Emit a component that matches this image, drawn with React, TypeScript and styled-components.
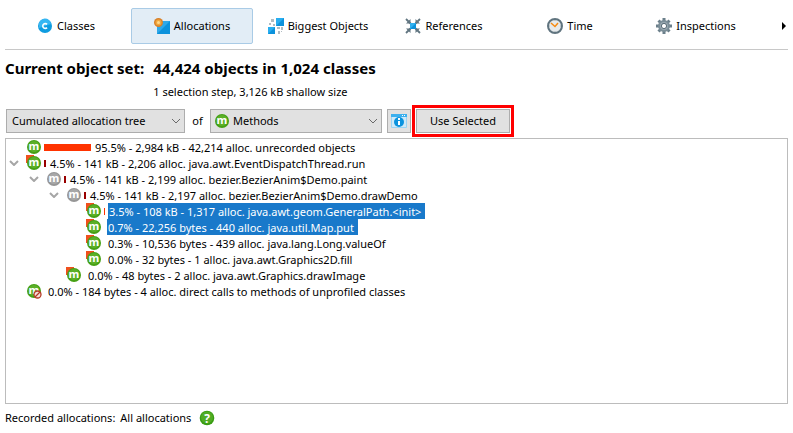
import React from "react";
import styled, { createGlobalStyle } from "styled-components";

const GlobalStyle = createGlobalStyle`
  * { box-sizing: border-box; }
  body {
    margin: 0;
    background: #fff;
    color: #000;
    font: 11px/16px "Noto Sans", "Open Sans", sans-serif;
  }
  button, select { font: inherit; color: inherit; }
`;

const Page = styled.main`
  display: flex;
  flex-direction: column;
  min-height: 100vh;
  padding: 8px 5px 7px;
`;

const Toolbar = styled.nav`
  display: flex;
  align-items: center;
  gap: 4px;
  padding-bottom: 5px;
  border-bottom: 1px solid #c8c8c8;
`;

const Tab = styled.button<{ $active?: boolean }>`
  display: flex;
  flex: 1 1 0;
  align-items: center;
  justify-content: center;
  gap: 4px;
  height: 36px;
  padding: 0;
  white-space: nowrap;
  border: 1px solid ${(p) => (p.$active ? "#a9cbe6" : "transparent")};
  border-radius: 2px;
  background: ${(p) => (p.$active ? "#e2edf6" : "transparent")};
`;

const MoreButton = styled.button`
  display: flex;
  align-items: center;
  justify-content: flex-end;
  width: 27px;
  height: 36px;
  padding: 0 2px 0 0;
  border: 0;
  background: transparent;
`;

const Summary = styled.header`
  display: grid;
  grid-template-columns: auto 1fr;
  column-gap: 9px;
  padding-top: 8px;
`;

const Title = styled.h1`
  margin: 0;
  font-size: 15px;
  line-height: 20px;
  font-weight: 700;
`;

const Detail = styled.p`
  grid-column: 2;
  margin: 0;
  padding-top: 6px;
`;

const Controls = styled.div`
  display: flex;
  align-items: center;
  height: 32px;
  margin-top: 5px;
  padding-left: 1px;
`;

const SelectBox = styled.label<{ $width: number }>`
  position: relative;
  display: block;
  width: ${(p) => p.$width}px;
`;

const Select = styled.select<{ $icon?: boolean }>`
  display: block;
  appearance: none;
  width: 100%;
  height: 24px;
  padding: 0 20px 0 ${(p) => (p.$icon ? 22 : 5)}px;
  border: 1px solid #adadad;
  border-radius: 0;
  background: #e1e1e1;
`;

const SelectMark = styled.span<{ $side: "left" | "right" }>`
  position: absolute;
  top: 0;
  bottom: 0;
  ${(p) => p.$side}: 4px;
  display: flex;
  align-items: center;
  pointer-events: none;
`;

const Joiner = styled.span`
  width: 25px;
  text-align: center;
`;

const PushButton = styled.button<{ $width: number }>`
  display: flex;
  align-items: center;
  justify-content: center;
  width: ${(p) => p.$width}px;
  height: 24px;
  padding: 0;
  white-space: nowrap;
  border: 1px solid #adadad;
  background: #e1e1e1;
`;

const InfoSlot = styled.div`
  margin: 0 1px 0 5px;
`;

const Highlight = styled.div`
  padding: 1px;
  border: 3px solid #f00;
`;

const Tree = styled.ul`
  flex: 1;
  margin: 1px 0 0;
  padding: 0;
  list-style: none;
  border: 1px solid #bcbcbc;
`;

const Row = styled.li<{ $level: number }>`
  display: flex;
  align-items: center;
  height: 16px;
  padding-left: ${(p) => 2 + p.$level * 20}px;
  white-space: nowrap;
`;

const Toggle = styled.button`
  display: flex;
  align-items: center;
  width: 18px;
  height: 16px;
  padding: 0 0 0 1px;
  border: 0;
  background: transparent;
`;

const ToggleSpace = styled.span`
  width: 18px;
`;

const Bar = styled.span<{ $color: string; $size: number }>`
  width: ${(p) => p.$size}px;
  height: 7px;
  margin-left: 2px;
  background: ${(p) => p.$color};
`;

const RowLabel = styled.span<{ $selected?: boolean }>`
  height: 16px;
  margin-left: 3px;
  padding: 1px 4px 0 1px;
  line-height: 15px;
  color: ${(p) => (p.$selected ? "#fff" : "#000")};
  background: ${(p) => (p.$selected ? "#1979ca" : "transparent")};
`;

const Footer = styled.footer`
  display: flex;
  align-items: center;
  gap: 5px;
  height: 16px;
  margin-top: 6px;
`;

const HelpButton = styled.button`
  display: flex;
  margin-left: 3px;
  padding: 0;
  border: 0;
  background: transparent;
`;

const Glyph = styled.text`
  font-family: "Open Sans", sans-serif;
  font-weight: 700;
  fill: #fff;
  text-anchor: middle;
`;

const ClassIcon = () => (
  <svg width="16" height="16" viewBox="0 0 16 16" aria-hidden="true">
    <circle cx="8" cy="8" r="7" fill="#0f9ce0" />
    <path d="M2 7a6 6 0 0 1 12-1L2 10z" fill="#35b6f2" />
    <path d="M10 6.4A2.4 2.4 0 1 0 10 9.6" fill="none" stroke="#fff" strokeWidth="1.6" />
  </svg>
);

const AllocationIcon = () => (
  <svg width="16" height="16" viewBox="0 0 16 16" aria-hidden="true">
    <path d="M3 3h13v13H3z" fill="#0c92dc" />
    <path d="M3 3h13L3 16z" fill="#2fa8e8" />
    <circle cx="4.5" cy="4.5" r="4.5" fill="#d9822b" />
    <circle cx="4.5" cy="4.5" r="3" fill="#f2a73c" />
    <circle cx="4.5" cy="4.5" r="1.5" fill="#ffd98a" />
  </svg>
);

const BiggestIcon = () => (
  <svg width="16" height="16" viewBox="0 0 16 16" aria-hidden="true">
    <path d="M8 0h8v8H8zM0 9h7v7H0z" fill="#0c92dc" />
    <path d="M8 0h8L8 8zM0 9h7l-7 7z" fill="#28aef0" />
    <path d="M3 1h3v3H3zM1 5h2v2H1zM5 6h2v2H5zM9 9h3v2H9zM13 9h2v3h-2zM10 13h2v3h-2zM13 13h1v1h-1z" fill="#b1bcc2" />
  </svg>
);

const ReferencesIcon = () => (
  <svg width="16" height="16" viewBox="0 0 16 16" aria-hidden="true">
    <path d="M1 1l5 5M15 1l-5 5M1 15l5-5M15 15l-5-5" stroke="#617580" strokeWidth="1.8" />
    <path d="M5.5 1v4.5H1zM10.5 1v4.5H15zM5.5 15v-4.5H1zM10.5 15v-4.5H15z" fill="#617580" />
    <path d="M5 5h6v6H5z" fill="#0c92dc" />
    <path d="M5 5h6l-6 6z" fill="#2fb0f0" />
  </svg>
);

const TimeIcon = () => (
  <svg width="16" height="16" viewBox="0 0 16 16" aria-hidden="true">
    <circle cx="8" cy="8" r="7" fill="#e6eaec" stroke="#60747f" strokeWidth="2" />
    <path d="M8 2v1M8 13v1M2 8h1M13 8h1" stroke="#9eabb2" />
    <path d="M4 5l4 3.5L11 5" fill="none" stroke="#f58a12" strokeWidth="1.5" />
  </svg>
);

const GearIcon = () => (
  <svg width="16" height="16" viewBox="0 0 16 16" aria-hidden="true">
    <g stroke="#6b7f8a" strokeWidth="3">
      <path d="M8 0v16M0 8h16" />
      <path d="M2.5 2.5l11 11M13.5 2.5l-11 11" />
    </g>
    <circle cx="8" cy="8" r="6" fill="#7b8e98" />
    <circle cx="8" cy="8" r="4" fill="#9aa9b1" />
    <circle cx="8" cy="8" r="2.6" fill="#fff" stroke="#566a75" />
  </svg>
);

const InfoIcon = () => (
  <svg width="16" height="14" viewBox="0 0 16 14" aria-hidden="true">
    <path d="M.5.5h15v13H.5z" fill="#cfe9f8" stroke="#9ad4f4" />
    <path d="M0 0h16v3H0z" fill="#3cb0ee" />
    <path d="M11 1h1v1h-1zM13 1h1v1h-1z" fill="#fff" />
    <circle cx="8" cy="8" r="5" fill="#0b93de" />
    <path d="M7 4h2v2H7zM7 7h2v4H7z" fill="#fff" />
  </svg>
);

type Kind = "plain" | "flagged" | "gray" | "blocked";

const MethodIcon = ({ kind = "plain" }: { kind?: Kind }) => (
  <svg width="16" height="16" viewBox="0 0 16 16" aria-hidden="true">
    {kind === "flagged" && <path d="M0 0h8v3L3 8H0z" fill="#f0501e" />}
    <circle cx="8" cy="8" r="7" fill={kind === "gray" ? "#969696" : "#45a014"} />
    <circle cx="8" cy="7.5" r="5.5" fill={kind === "gray" ? "#a8a8a8" : "#5cb028"} />
    <Glyph x="8" y="11" fontSize="11">m</Glyph>
    {kind === "blocked" && (
      <>
        <circle cx="11.5" cy="11.5" r="3.5" fill="#f4dedb" stroke="#b53a25" strokeWidth="1.3" />
        <path d="M9 14l5-5" stroke="#b53a25" strokeWidth="1.3" />
      </>
    )}
  </svg>
);

const HelpIcon = () => (
  <svg width="16" height="16" viewBox="0 0 16 16" aria-hidden="true">
    <circle cx="8" cy="8" r="7.3" fill="#389c12" />
    <circle cx="8" cy="7.5" r="6" fill="#50ac24" />
    <Glyph x="8" y="12.5" fontSize="12">?</Glyph>
  </svg>
);

const Chevron = ({ bold }: { bold?: boolean }) => (
  <svg width="10" height="6" viewBox="0 0 10 6" aria-hidden="true">
    <path d="M1 1l4 4 4-4" fill="none" stroke={bold ? "#a6a6a6" : "#6a6a6a"} strokeWidth={bold ? 2 : 1} />
  </svg>
);

const tabs = [
  { label: "Classes", Icon: ClassIcon },
  { label: "Allocations", Icon: AllocationIcon, active: true },
  { label: "Biggest Objects", Icon: BiggestIcon },
  { label: "References", Icon: ReferencesIcon },
  { label: "Time", Icon: TimeIcon },
  { label: "Inspections", Icon: GearIcon },
];

interface Node {
  level: number;
  kind: Kind;
  text: string;
  size?: number;
  color?: string;
  open?: boolean;
  selected?: boolean;
}

const RED = "#ff3300";
const DARK = "#990000";

const nodes: Node[] = [
  { level: 0, kind: "plain", size: 47, color: RED, text: "95.5% - 2,984 kB - 42,214 alloc. unrecorded objects" },
  { level: 0, kind: "flagged", size: 2, color: DARK, open: true, text: "4.5% - 141 kB - 2,206 alloc. java.awt.EventDispatchThread.run" },
  { level: 1, kind: "gray", size: 2, color: DARK, open: true, text: "4.5% - 141 kB - 2,199 alloc. bezier.BezierAnim$Demo.paint" },
  { level: 2, kind: "gray", size: 2, color: DARK, open: true, text: "4.5% - 141 kB - 2,197 alloc. bezier.BezierAnim$Demo.drawDemo" },
  { level: 3, kind: "flagged", size: 1, color: RED, selected: true, text: "3.5% - 108 kB - 1,317 alloc. java.awt.geom.GeneralPath.<init>" },
  { level: 3, kind: "flagged", selected: true, text: "0.7% - 22,256 bytes - 440 alloc. java.util.Map.put" },
  { level: 3, kind: "flagged", text: "0.3% - 10,536 bytes - 439 alloc. java.lang.Long.valueOf" },
  { level: 3, kind: "flagged", text: "0.0% - 32 bytes - 1 alloc. java.awt.Graphics2D.fill" },
  { level: 2, kind: "flagged", text: "0.0% - 48 bytes - 2 alloc. java.awt.Graphics.drawImage" },
  { level: 0, kind: "blocked", text: "0.0% - 184 bytes - 4 alloc. direct calls to methods of unprofiled classes" },
];

export default function App() {
  return (
    <Page>
      <GlobalStyle />
      <Toolbar>
        {tabs.map(({ label, Icon, active }) => (
          <Tab key={label} type="button" $active={active}>
            <Icon />
            {label}
          </Tab>
        ))}
        <MoreButton type="button" aria-label="More views">
          <svg width="4" height="8" viewBox="0 0 4 8" aria-hidden="true">
            <path d="M0 0l4 4-4 4z" />
          </svg>
        </MoreButton>
      </Toolbar>

      <Summary>
        <Title>Current object set:</Title>
        <Title as="p">44,424 objects in 1,024 classes</Title>
        <Detail>1 selection step, 3,126 kB shallow size</Detail>
      </Summary>

      <Controls>
        <SelectBox $width={179}>
          <Select aria-label="View">
            <option>Cumulated allocation tree</option>
          </Select>
          <SelectMark $side="right"><Chevron /></SelectMark>
        </SelectBox>
        <Joiner>of</Joiner>
        <SelectBox $width={172}>
          <Select $icon aria-label="Aggregation level">
            <option>Methods</option>
          </Select>
          <SelectMark $side="left"><MethodIcon /></SelectMark>
          <SelectMark $side="right"><Chevron /></SelectMark>
        </SelectBox>
        <InfoSlot>
          <PushButton $width={24} type="button" aria-label="Show info"><InfoIcon /></PushButton>
        </InfoSlot>
        <Highlight>
          <PushButton $width={94} type="button">Use Selected</PushButton>
        </Highlight>
      </Controls>

      <Tree role="tree">
        {nodes.map((n) => (
          <Row key={n.text} $level={n.level} role="treeitem" aria-selected={!!n.selected}>
            {n.open ? (
              <Toggle type="button" aria-label="Collapse"><Chevron bold /></Toggle>
            ) : (
              <ToggleSpace />
            )}
            <MethodIcon kind={n.kind} />
            <Bar $size={n.size ?? 0} $color={n.color ?? "transparent"} />
            <RowLabel $selected={n.selected}>{n.text}</RowLabel>
          </Row>
        ))}
      </Tree>

      <Footer>
        <span>Recorded allocations:</span>
        <span>All allocations</span>
        <HelpButton type="button" aria-label="Help"><HelpIcon /></HelpButton>
      </Footer>
    </Page>
  );
}
